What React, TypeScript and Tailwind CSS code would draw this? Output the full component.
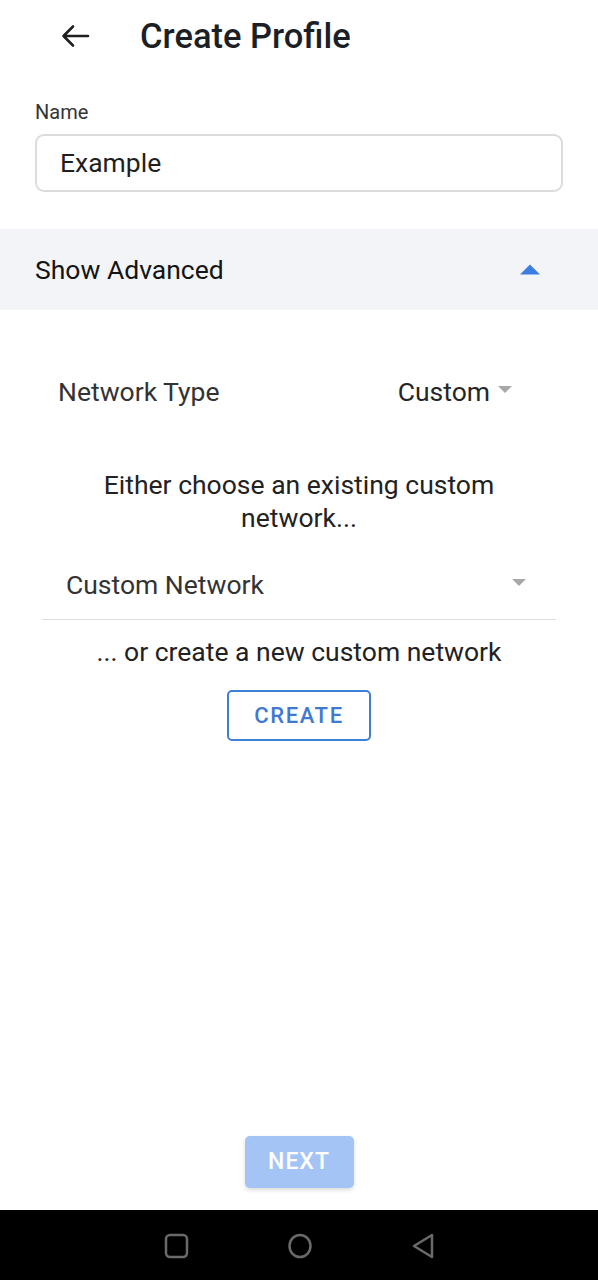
const Caret = ({ className }: { className: string }) => (
  <svg viewBox="0 0 10 5" className={className}>
    <path d="M0 0 L10 0 L5 5 Z" fill="currentColor" />
  </svg>
);

export default function App() {
  return (
    <div className="w-[598px] h-[1280px] bg-white flex flex-col text-[#212121] font-['Roboto',sans-serif]">
      {/* Header */}
      <div className="h-[72px] flex items-center">
        <svg viewBox="0 0 30 24" className="ml-[60px] w-[30px] h-[24px] text-[#1f1f1f]">
          <path d="M28 12 H3.5 M13 2.5 L3.5 12 L13 21.5" fill="none" stroke="currentColor" strokeWidth="2.6" strokeLinecap="round" strokeLinejoin="round" />
        </svg>
        <h1 className="ml-[50px] text-[34.5px] leading-[40px] font-medium text-[#1c1f26]">Create Profile</h1>
      </div>

      {/* Name */}
      <div className="px-[35px] pt-[29px]">
        <label className="block text-[20px] text-[#333] leading-[22px]">Name</label>
        <div className="mt-[11px] h-[58px] rounded-[9px] border-2 border-[#dcdcdc] flex items-center px-[23px]">
          <span className="text-[26.5px] leading-[32px] text-[#1f1f1f]">Example</span>
        </div>
      </div>

      {/* Show Advanced */}
      <div className="mt-[37px] h-[81px] bg-[#f3f4f7] flex items-center justify-between pl-[35px] pr-[58px]">
        <span className="text-[26.5px] leading-[32px] text-[#141414]">Show Advanced</span>
        <Caret className="w-[20px] h-[11px] rotate-180 text-[#3b7de0]" />
      </div>

      {/* Advanced */}
      <div className="flex flex-col">
        <div className="mt-[64px] flex items-center justify-between pl-[58px] pr-[86px] h-[36px]">
          <span className="text-[26.5px] leading-[36px] text-[#333]">Network Type</span>
          <div className="flex items-center gap-[8px]">
            <span className="text-[26.5px] leading-[36px] text-[#262626]">Custom</span>
            <Caret className="w-[14px] h-[7px] mb-[5px] text-[#a8a8a8]" />
          </div>
        </div>

        <p className="mt-[58px] text-center text-[26.5px] leading-[33px] text-[#222] px-[90px]">
          Either choose an existing custom network...
        </p>

        <div className="mx-[42px] mt-[16px] h-[70px] border-b border-[#dddddd] flex items-center justify-between pl-[24px] pr-[30px]">
          <span className="text-[26.5px] leading-[32px] text-[#333]">Custom Network</span>
          <Caret className="w-[14px] h-[7px] mb-[5px] text-[#a8a8a8]" />
        </div>

        <p className="mt-[15px] text-center text-[26.5px] leading-[33px] text-[#222]">
          ... or create a new custom network
        </p>

        <div className="mt-[22px] flex justify-center">
          <button className="w-[144px] h-[51px] rounded-[5px] border-2 border-[#3e7fd8] text-[#3f7ad0] text-[22px] font-medium tracking-[1.6px]">
            CREATE
          </button>
        </div>
      </div>

      <div className="flex-1" />

      {/* Next */}
      <div className="flex justify-center pb-[22px]">
        <button className="w-[109px] h-[52px] rounded-[5px] bg-[#a4c4f6] text-white text-[23px] font-medium tracking-[1px] shadow-[0_2px_4px_rgba(0,0,0,0.15)]">
          NEXT
        </button>
      </div>

      {/* Android nav */}
      <div className="h-[70px] bg-black flex items-center justify-center">
        <svg viewBox="0 0 300 30" className="ml-[3px] w-[300px] h-[30px]">
          <rect x="15" y="5" width="21" height="22" rx="4" fill="none" stroke="#6a6a6a" strokeWidth="2.5" />
          <ellipse cx="149" cy="16" rx="10.5" ry="11" fill="none" stroke="#6a6a6a" strokeWidth="2.5" />
          <path d="M281 5 L281 27 L263 16 Z" fill="none" stroke="#6a6a6a" strokeWidth="2.5" strokeLinejoin="round" />
        </svg>
      </div>
    </div>
  );
}
